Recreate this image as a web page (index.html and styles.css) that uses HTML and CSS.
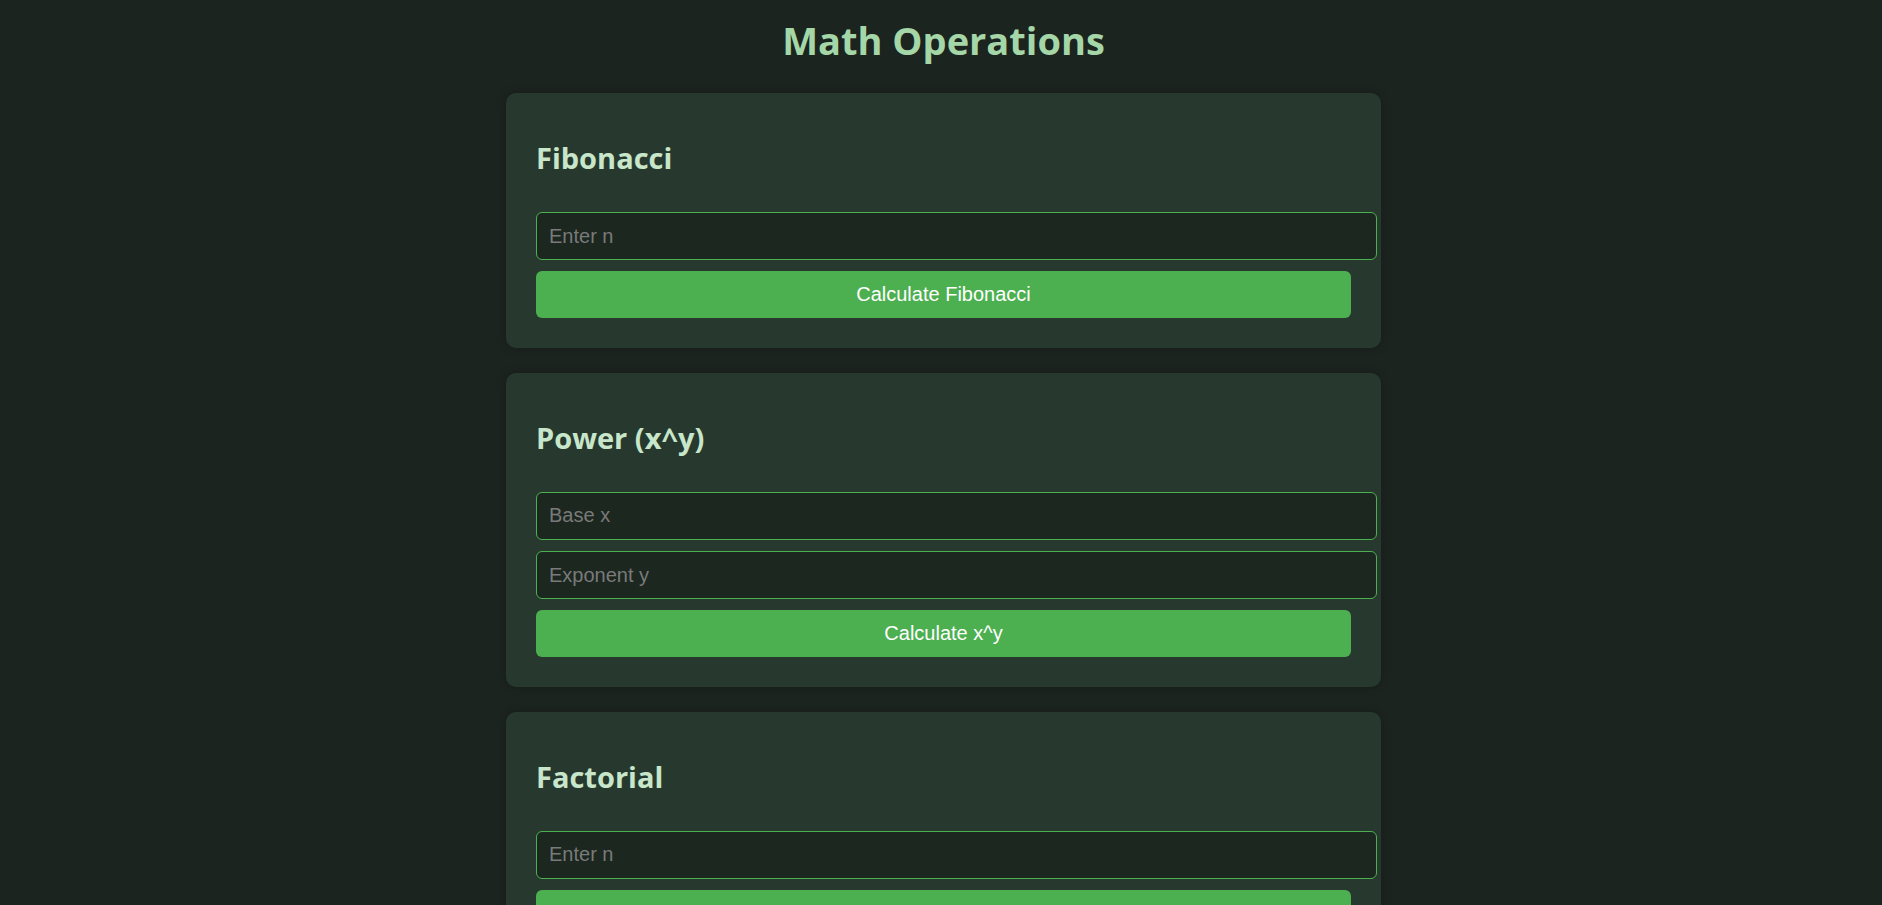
FILE: index.html
```html
<!DOCTYPE html>
<html lang="en">
<head>
<meta charset="utf-8">
<title>Math Operations</title>
<link rel="stylesheet" href="styles.css">
</head>
<body>
<main class="page">
  <h1 class="title">Math Operations</h1>
  <div class="cards">
    <section class="card">
      <h2 class="card-title">Fibonacci</h2>
      <div class="form">
        <input class="field" type="number" placeholder="Enter n">
        <button class="btn" type="button">Calculate Fibonacci</button>
      </div>
    </section>
    <section class="card">
      <h2 class="card-title">Power (x^y)</h2>
      <div class="form">
        <input class="field" type="number" placeholder="Base x">
        <input class="field" type="number" placeholder="Exponent y">
        <button class="btn" type="button">Calculate x^y</button>
      </div>
    </section>
    <section class="card">
      <h2 class="card-title">Factorial</h2>
      <div class="form">
        <input class="field" type="number" placeholder="Enter n">
        <button class="btn" type="button">Calculate Factorial</button>
      </div>
    </section>
  </div>
</main>
</body>
</html>
```

FILE: styles.css
```css
html, body {
  margin: 0;
  padding: 0;
  background: #1c2420;
}

body {
  font-family: "Open Sans", "Noto Sans", sans-serif;
}

.page {
  display: flex;
  flex-direction: column;
  align-items: center;
  padding: 0 0 40px 5px;
}

.title {
  margin: 14px 0 26px;
  font-size: 38px;
  line-height: 53px;
  font-weight: 700;
  color: #a5d6a7;
  text-align: center;
}

.cards {
  width: 875px;
  display: flex;
  flex-direction: column;
  gap: 24.5px;
}

.card {
  background: #27392f;
  border-radius: 10px;
  padding: 30px;
  box-shadow: 0 0 8px rgba(0, 0, 0, 0.25);
}

.card-title {
  margin: 15px 0 34px;
  font-size: 29px;
  line-height: 40px;
  font-weight: 700;
  color: #c8e6c9;
}

.form {
  display: flex;
  flex-direction: column;
  align-items: flex-start;
  gap: 11.25px;
}

.field {
  box-sizing: content-box;
  width: 100%;
  height: 22px;
  padding: 12px;
  margin: 0;
  border: 1px solid #4caf50;
  border-radius: 6px;
  background: #1c2720;
  color: #e0e0e0;
  font-family: "Liberation Sans", Arial, sans-serif;
  font-size: 20px;
  outline: none;
}

.field::placeholder {
  color: #7a7a7a;
}

.field::-webkit-outer-spin-button,
.field::-webkit-inner-spin-button {
  -webkit-appearance: none;
  margin: 0;
}

.btn {
  width: 100%;
  height: 47px;
  margin: 0;
  border: none;
  border-radius: 6px;
  background: #4caf50;
  color: #ffffff;
  font-family: "Liberation Sans", Arial, sans-serif;
  font-size: 20px;
  cursor: pointer;
}
```
